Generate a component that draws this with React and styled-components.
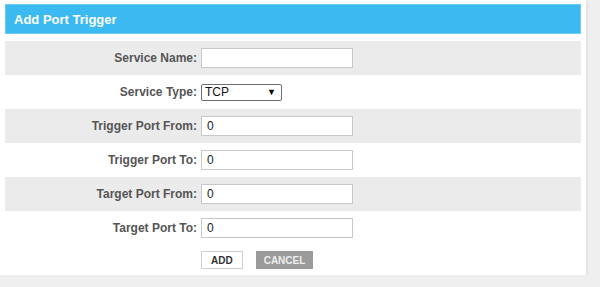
import React from "react";
import styled, { createGlobalStyle } from "styled-components";

const Global = createGlobalStyle`
  body {
    margin: 0;
    background: #efefef;
    font-family: "Liberation Sans", Arial, sans-serif;
  }
`;

const rows = [
  { label: "Service Name:", value: "" },
  { label: "Service Type:", select: "TCP" },
  { label: "Trigger Port From:", value: "0" },
  { label: "Trigger Port To:", value: "0" },
  { label: "Target Port From:", value: "0" },
  { label: "Target Port To:", value: "0" },
];

const App = () => {
  return (
    <>
      <Global />
      <Panel>
        <Header>Add Port Trigger</Header>
        <Form>
          {rows.map((r, i) => (
            <Row key={r.label} shaded={i % 2 === 0}>
              <Label>{r.label}</Label>
              {r.select ? (
                <SelectBox>
                  <span>{r.select}</span>
                  <Arrow>▼</Arrow>
                </SelectBox>
              ) : (
                <Input defaultValue={r.value} />
              )}
            </Row>
          ))}
          <Buttons>
            <Button>ADD</Button>
            <Button muted>CANCEL</Button>
          </Buttons>
        </Form>
      </Panel>
    </>
  );
};

export default App;

const Panel = styled.div`
  width: 576px;
  height: 271px;
  padding: 4px 5px 0;
  background: #fff;
  box-shadow: 1px 1px 3px rgba(0, 0, 0, 0.08);
`;

const Header = styled.div`
  height: 28px;
  display: flex;
  align-items: center;
  padding-left: 8px;
  background: #3bbaf1;
  border: 1px solid #6ccbf5;
  color: #fff;
  font-weight: bold;
  font-size: 13px;
`;

const Form = styled.div`
  margin-top: 7px;
`;

const Row = styled.div`
  display: grid;
  grid-template-columns: 192px 1fr;
  column-gap: 4px;
  align-items: center;
  height: 34px;
  background: ${(p) => (p.shaded ? "#ebebeb" : "#fff")};
`;

const Label = styled.div`
  text-align: right;
  font-weight: bold;
  font-size: 12px;
  color: #555;
`;

const Input = styled.input`
  box-sizing: border-box;
  width: 152px;
  height: 20px;
  border: 1px solid #c8c8c8;
  padding: 0 5px;
  font-family: "Liberation Sans", Arial, sans-serif;
  font-size: 12px;
  color: #222;
  background: #fff;
  outline: none;
`;

const SelectBox = styled.div`
  box-sizing: border-box;
  width: 81px;
  height: 17px;
  display: flex;
  align-items: center;
  justify-content: space-between;
  padding: 0 5px 0 3px;
  border: 1px solid #6e6e6e;
  border-radius: 2px;
  background: #fff;
  font-size: 12px;
  color: #111;
`;

const Arrow = styled.span`
  font-size: 9px;
  color: #000;
`;

const Buttons = styled.div`
  display: flex;
  gap: 13px;
  margin: 6px 0 0 196px;
`;

const Button = styled.button`
  box-sizing: border-box;
  height: 18px;
  padding: 0 ${(p) => (p.muted ? "7px" : "9px")};
  border: 1px solid ${(p) => (p.muted ? "#9a9a9a" : "#d0d0d0")};
  background: ${(p) => (p.muted ? "#9a9a9a" : "#fff")};
  color: ${(p) => (p.muted ? "#eee" : "#333")};
  font-family: "Liberation Sans", Arial, sans-serif;
  font-weight: bold;
  font-size: 10px;
  cursor: pointer;
`;
